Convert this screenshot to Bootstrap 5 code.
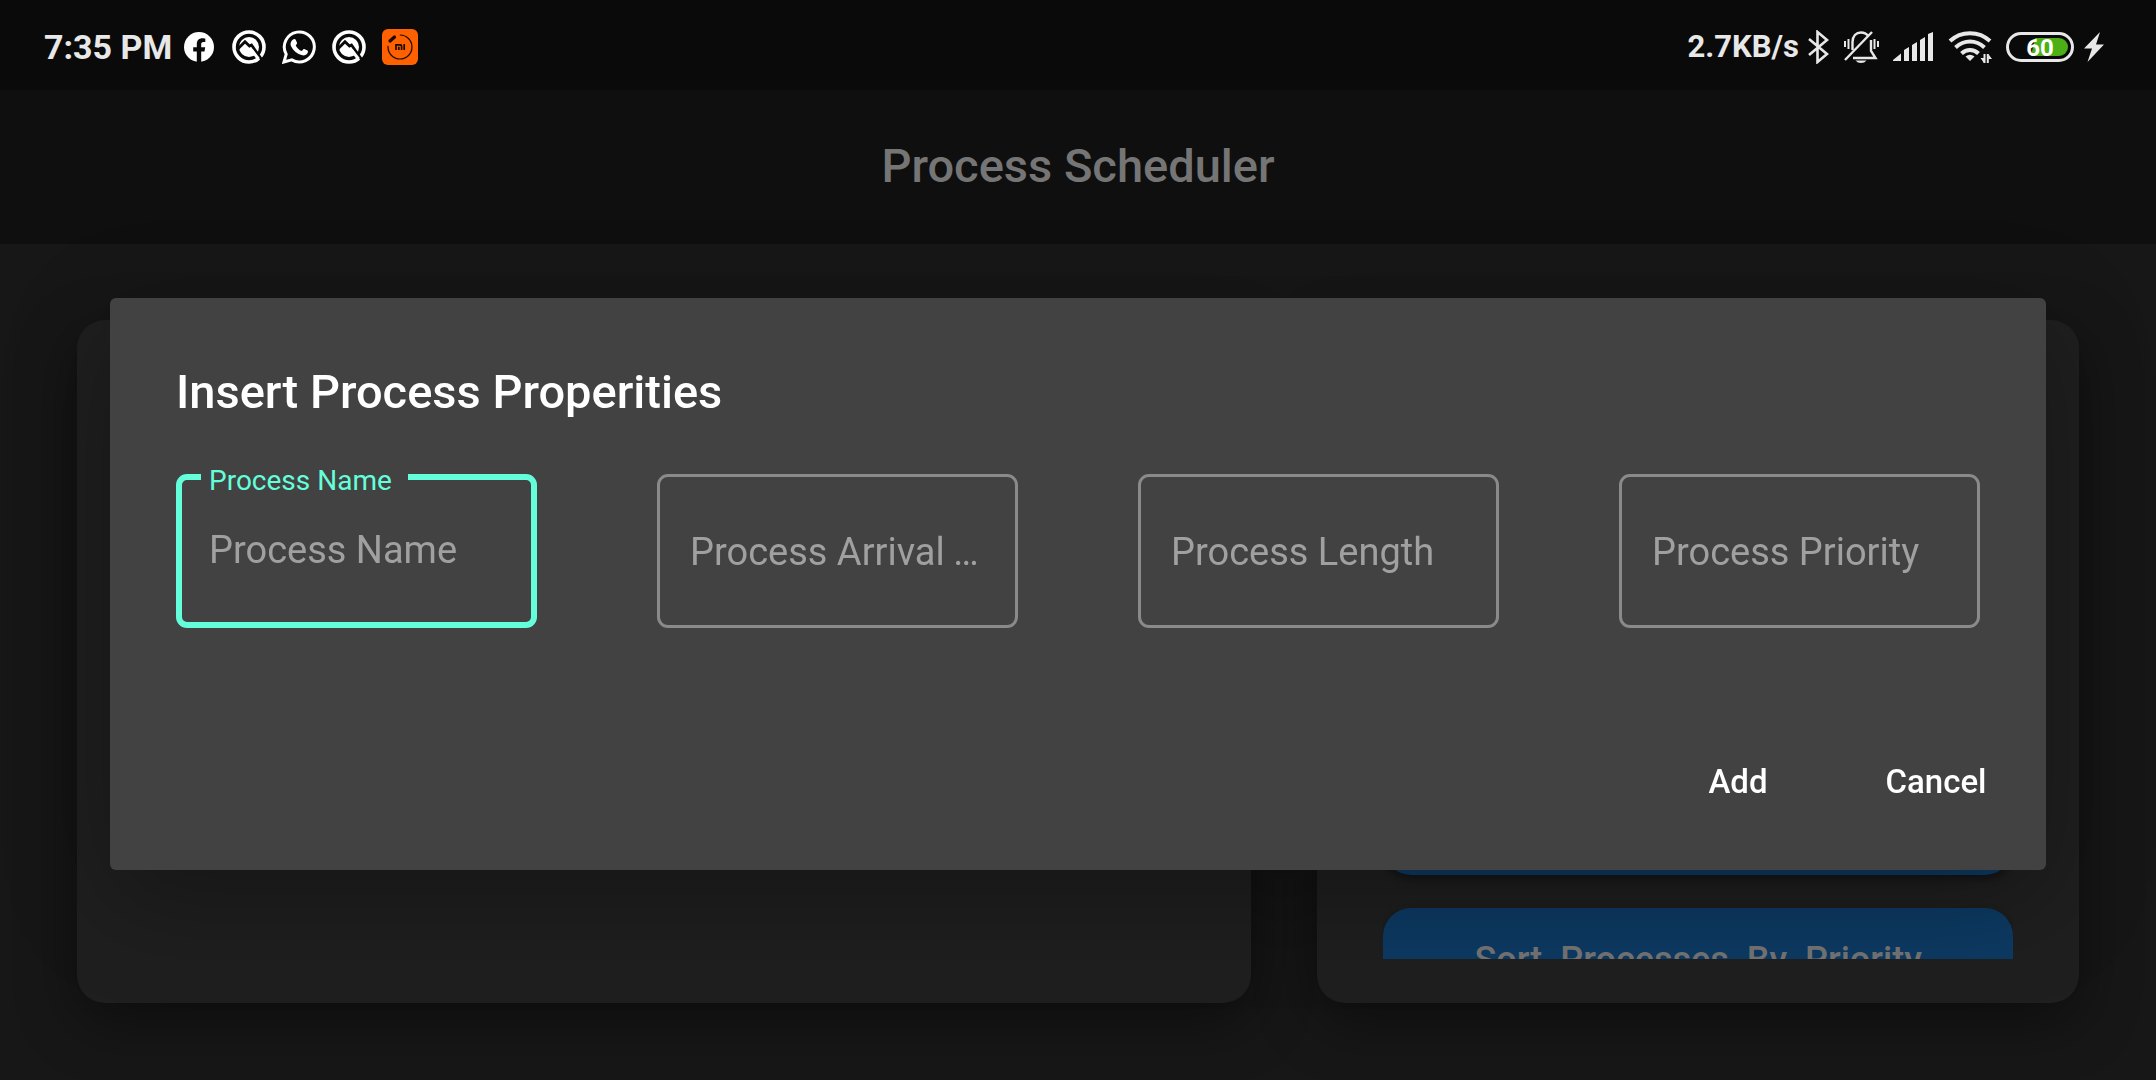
<!DOCTYPE html>
<html lang="en">
<head>
<meta charset="utf-8">
<meta name="viewport" content="width=device-width, initial-scale=1">
<title>Process Scheduler</title>
<link href="https://cdn.jsdelivr.net/npm/bootstrap@5.3.0/dist/css/bootstrap.min.css" rel="stylesheet">
<style>
body { font-family: Roboto, "Liberation Sans", sans-serif; background: #171717; color: #e8e8e8; }
.status-bar { height: 90px; padding: 4px 52px 0 44px; background: #0a0a0a; z-index: 1060; }
.status-bar svg { display: block; flex: none; }
.clock { font-size: 34px; font-weight: 700; line-height: 40px; margin-right: 10px; }
.net-speed { font-size: 31px; font-weight: 700; line-height: 40px; margin-right: 8px; }
.notices { gap: 16px; }
.signals { gap: 14px; }
.power { gap: 10px; }
.app-bar { height: 154px; padding-bottom: 2px; background: #0f0f0f; }
.app-title { font-size: 47px; font-weight: 500; line-height: 56px; color: #757575; }
.board { padding: 76px 77px 77px; gap: 66px; min-height: 0; }
.panel { background: #1f1f1f; border-radius: 28px; box-shadow: 0 18px 60px rgba(0,0,0,.42); min-height: 0; min-width: 0; }
.panel-list { flex: 37 1 0; }
.panel-actions { flex: 24 1 0; }
.action-list { margin: 44px 66px; gap: 33px; overflow: hidden; }
.action-btn { flex: none; height: 103px; border: 0; border-radius: 28px; background: #0d3a63; color: #757575; font-size: 36px; font-weight: 500; line-height: 44px; box-shadow: 0 4px 8px rgba(0,0,0,.4); }
.dialog-layer { top: 90px; height: auto; bottom: 0; padding: 0 110px 2px; }
.dialog-box { background: #424242; border-radius: 6px; box-shadow: 0 30px 104px rgba(0,0,0,.3); }
.dialog-title { padding: 66px 66px 0; font-size: 47px; font-weight: 500; line-height: 56px; color: #fff; }
.dialog-fields { padding: 54px 66px 66px; gap: 120px; }
.field { flex: 1 1 0; min-width: 0; }
.field-input { height: 154px; padding: 2px 30px 0; border: 3px solid #8a8a8a; border-radius: 11px; background: transparent; color: #fff; font-size: 38px; line-height: 44px; text-overflow: ellipsis; }
.field-input::placeholder { color: #a0a0a0; opacity: 1; text-overflow: ellipsis; }
.field-input:focus { background: transparent; color: #fff; box-shadow: none; border-color: #8a8a8a; }
.field-active .field-input, .field-active .field-input:focus { border: 6px solid #64ffda; padding: 0 27px 2px; }
.field-label { position: absolute; top: -10px; left: 25px; padding: 0 16px 0 8px; background: #424242; color: #64ffda; font-size: 28px; line-height: 34px; }
.dialog-actions { padding: 22px; gap: 22px; }
.dialog-btn { min-width: 176px; height: 132px; padding: 0; border: 0; color: #fff; font-size: 33px; font-weight: 500; line-height: 40px; }
.dialog-btn:hover { color: #64ffda; }
</style>
</head>
<body class="d-flex flex-column vh-100 overflow-hidden">
<div class="status-bar d-flex flex-shrink-0 align-items-center justify-content-between position-relative">
  <div class="d-flex align-items-center">
    <span class="clock">7:35 PM</span>
    <div class="notices d-flex align-items-center">
      <svg width="34" height="34" viewBox="-2 -2 34 34"><circle cx="15" cy="15" r="15" fill="#fff"/><path d="M12.8 30V19.5H9.200V15.200H12.800V12.200C12.800 8.200 15 6.200 18.500 6.200C19.900 6.200 21.300 6.500 21.300 6.500V10H19.400C17.700 10 17.200 11 17.200 12.200V15.200H21.200L20.500 19.500H17.200V30Z" fill="#0a0a0a"/></svg>
      <svg width="34" height="34" viewBox="1 1 34 34"><circle cx="18" cy="18" r="15" fill="none" stroke="#fff" stroke-width="3.600"/><circle cx="18" cy="18" r="10" fill="#fff"/><path d="M5.700 21L14 12.800L18.500 17L20.500 16L31 31" fill="none" stroke="#0a0a0a" stroke-width="2.800"/><path d="M20.500 21L27.500 30" stroke="#fff" stroke-width="3"/></svg>
      <svg width="34" height="34" viewBox="0 0 34 34"><path d="M2 32L4.200 24.200A15 15 0 1 1 9.800 29.900Z" fill="none" stroke="#fff" stroke-width="3"/><path d="M11.600 9.200C12.300 8.800 13.300 8.900 13.700 9.700L15 12.800C15.200 13.500 14.900 14 13.700 15.400C15 18 17 19.900 19.800 21C21.200 19.200 21.600 18.700 22.300 19L25.500 20.600C26.200 21 26 22.200 25.600 23.100C24.800 24.800 22.200 25.800 20.300 25.300C14.900 24 11.300 20.700 9.200 16.500C7.800 13.700 9 10.500 11.600 9.200Z" fill="#fff"/></svg>
      <svg width="34" height="34" viewBox="1 1 34 34"><circle cx="18" cy="18" r="15" fill="none" stroke="#fff" stroke-width="3.600"/><circle cx="18" cy="18" r="10" fill="#fff"/><path d="M5.700 21L14 12.800L18.500 17L20.500 16L31 31" fill="none" stroke="#0a0a0a" stroke-width="2.800"/><path d="M20.500 21L27.500 30" stroke="#fff" stroke-width="3"/></svg>
      <svg width="36" height="36" viewBox="0 0 36 36"><rect width="36" height="36" rx="6" fill="#ff6000"/><circle cx="18" cy="18" r="12" fill="none" stroke="#1a0a00" stroke-width="1.200" stroke-dasharray="58 17.400" stroke-dashoffset="-56"/><path d="M8 12L12.500 8" stroke="#1a0a00" stroke-width="3.200" stroke-linecap="round"/><path d="M14 21V15.800H18.300Q19.600 15.800 19.600 17.200V21M16.800 17.800V21M22.200 15V21" fill="none" stroke="#1a0a00" stroke-width="1.700"/></svg>
    </div>
  </div>
  <div class="d-flex align-items-center">
    <span class="net-speed">2.7KB/s</span>
    <div class="signals d-flex align-items-center">
      <svg width="22" height="34" viewBox="0 0 22 34" fill="none" stroke="#e8e8e8" stroke-width="2.600"><path d="M2 9L20 24L10.500 32V2L20 10L2 25"/></svg>
      <svg width="36" height="34" viewBox="0 0 36 34" fill="none" stroke="#e8e8e8" stroke-width="2.400"><path d="M9.500 20V12C9.500 6 13 2.500 18 2.500C21 2.500 23.500 3.700 25 5.800M28 10V21L32.500 28H10"/><path d="M2 30L29 2"/><path d="M12.500 30.500H23.500Q21.500 33 18 33T12.500 30.500Z" fill="#e8e8e8" stroke="none"/><path d="M5.500 9V19M2 11V17M31.500 9V19M35 11V17" stroke-width="2"/></svg>
      <svg width="41" height="30" viewBox="0 0 41 30" fill="#e8e8e8"><path d="M0 29V28L8 21.500V29ZM11 29V18L16 15V29ZM19 29V13L24 10V29ZM27 29V8L32 5V29ZM35 29V2L40 0V29Z"/></svg>
      <svg width="44" height="34" viewBox="0 0 44 34" fill="none" stroke="#e8e8e8" stroke-width="4"><path d="M2 11C13 .5 31 .5 42 11M7.500 17.500C16 9.500 28 9.500 36.500 17.500M13.500 23.500C18.500 18.800 25.500 18.800 30.500 23.500"/><path d="M22 31L17.500 26.500Q22 23 26.500 26.500Z" fill="#e8e8e8" stroke="none"/><path d="M36.500 24V33M39.800 33V24" stroke-width="2"/><path d="M32.500 28H36V33ZM44 29H40.300V24Z" fill="#e8e8e8" stroke="none"/></svg>
      <div class="power d-flex align-items-center">
        <svg width="68" height="30" viewBox="0 0 68 30"><rect x="1.500" y="1.500" width="65" height="27" rx="13.500" fill="none" stroke="#e8e8e8" stroke-width="3"/><path d="M29 6H53A9 9 0 0 1 53 24H25Z" fill="#4caf16"/><text x="34" y="24" text-anchor="middle" font-family="Roboto, sans-serif" font-size="24" font-weight="700" fill="#fff">60</text></svg>
        <svg width="20" height="30" viewBox="0 0 20 30" fill="#e8e8e8"><path d="M16 0L0 16.500H8L3.500 30L20 12.500H12Z"/></svg>
      </div>
    </div>
  </div>
</div>
<header class="app-bar d-flex flex-shrink-0 align-items-center justify-content-center">
  <h1 class="app-title m-0">Process Scheduler</h1>
</header>
<main class="board d-flex flex-fill">
  <section class="panel panel-list" aria-label="Processes"></section>
  <section class="panel panel-actions d-flex" aria-label="Actions">
    <div class="action-list d-flex flex-column flex-fill">
      <button type="button" class="action-btn" aria-label="Insert process"></button>
      <button type="button" class="action-btn" aria-label="Clear processes"></button>
      <button type="button" class="action-btn" aria-label="Sort by name"></button>
      <button type="button" class="action-btn" aria-label="Sort by length"></button>
      <button type="button" class="action-btn">Sort&nbsp; Processes&nbsp; By&nbsp; Priority</button>
    </div>
  </section>
</main>
<div class="modal dialog-layer d-flex align-items-center" role="dialog" aria-modal="true" aria-labelledby="dialogTitle">
  <form class="dialog-box w-100">
    <h2 class="dialog-title m-0" id="dialogTitle">Insert Process Properities</h2>
    <div class="dialog-fields d-flex">
      <div class="field field-active position-relative">
        <input class="form-control field-input" id="processName" type="text" placeholder="Process Name">
        <label class="field-label" for="processName">Process Name</label>
      </div>
      <div class="field"><input class="form-control field-input" type="text" placeholder="Process Arrival Time" aria-label="Process Arrival Time"></div>
      <div class="field"><input class="form-control field-input" type="text" placeholder="Process Length" aria-label="Process Length"></div>
      <div class="field"><input class="form-control field-input" type="text" placeholder="Process Priority" aria-label="Process Priority"></div>
    </div>
    <div class="dialog-actions d-flex justify-content-end">
      <button type="button" class="btn dialog-btn">Add</button>
      <button type="button" class="btn dialog-btn">Cancel</button>
    </div>
  </form>
</div>
<script src="https://cdn.jsdelivr.net/npm/bootstrap@5.3.0/dist/js/bootstrap.bundle.min.js"></script>
</body>
</html>
